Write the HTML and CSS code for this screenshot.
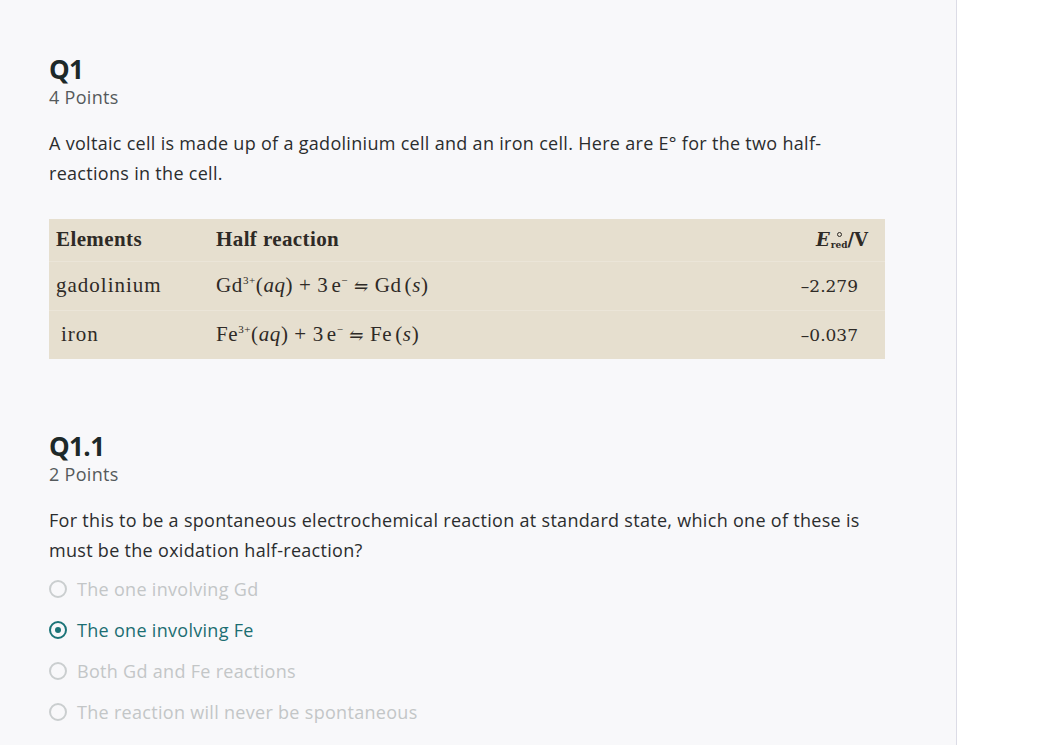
FILE: index.html
```html
<!DOCTYPE html>
<html>
<head>
<meta charset="utf-8">
<link rel="stylesheet" href="styles.css">
</head>
<body>
<div class="layout">
  <main class="main">
    <section class="question">
      <h1 class="q-title">Q1</h1>
      <div class="q-points">4 Points</div>
      <p class="q-text">A voltaic cell is made up of a gadolinium cell and an iron cell. Here are E° for the two half-reactions in the cell.</p>
      <table class="chem">
        <tr class="head">
          <th class="c1">Elements</th>
          <th class="c2">Half reaction</th>
          <th class="c3"><span class="ev"><i>E</i><span class="ss"><span class="deg"></span><span class="red">red</span></span>/V</span></th>
        </tr>
        <tr>
          <td class="c1">gadolinium</td>
          <td class="c2">Gd<sup>3+</sup>(<i>aq</i>) + 3<span class="thin"></span>e<sup>−</sup> <span class="eq">⇋</span> Gd<span class="thin"></span>(<i>s</i>)</td>
          <td class="c3 num">–2.279</td>
        </tr>
        <tr>
          <td class="c1 ind">iron</td>
          <td class="c2">Fe<sup>3+</sup>(<i>aq</i>) + 3<span class="thin"></span>e<sup>−</sup> <span class="eq">⇋</span> Fe<span class="thin"></span>(<i>s</i>)</td>
          <td class="c3 num">–0.037</td>
        </tr>
      </table>
    </section>
    <section class="question sub">
      <h2 class="q-title">Q1.1</h2>
      <div class="q-points">2 Points</div>
      <p class="q-text">For this to be a spontaneous electrochemical reaction at standard state, which one of these is must be the oxidation half-reaction?</p>
      <ul class="options">
        <li class="opt"><span class="radio"></span>The one involving Gd</li>
        <li class="opt selected"><span class="radio"></span>The one involving Fe</li>
        <li class="opt"><span class="radio"></span>Both Gd and Fe reactions</li>
        <li class="opt"><span class="radio"></span>The reaction will never be spontaneous</li>
      </ul>
    </section>
  </main>
  <aside class="side"></aside>
</div>
</body>
</html>
```

FILE: styles.css
```css
* { box-sizing: border-box; }
html, body { margin: 0; padding: 0; height: 100%; }
body {
  background: #ffffff;
  font-family: "Open Sans", Lato, sans-serif;
  color: #2b2d2e;
}
.layout {
  display: flex;
  height: 745px;
  overflow: hidden;
}
.main {
  width: 957px;
  flex: none;
  background: #f8f8fa;
  border-right: 1px solid #dcdce6;
  padding: 52px 0 0 49px;
}
.side { flex: 1; background: #fff; }
.question { width: 836px; }
.q-title {
  margin: 0;
  font-size: 26px;
  font-weight: 700;
  line-height: 34px;
  color: #1d2929;
  letter-spacing: -0.6px;
}
.q-points {
  font-size: 18px;
  line-height: 22px;
  color: #555a5c;
  letter-spacing: 0.3px;
}
.q-text {
  margin: 20px 0 0;
  font-size: 18px;
  line-height: 30px;
  color: #2b2d2e;
  letter-spacing: 0.3px;
}
.chem {
  margin-top: 31px;
  width: 836px;
  border-collapse: collapse;
  background: #e6dfcf;
  font-family: "Liberation Serif", "DejaVu Serif", serif;
  color: #2e2a26;
  font-size: 21px;
  letter-spacing: 0.6px;
}
.chem tr { height: 49px; }
.chem tr.head { height: 42px; }
.chem tr + tr td { border-top: 1px solid #ebe5d8; }
.chem th { font-weight: 700; text-align: left; letter-spacing: 0.4px; }
.chem .c1 { width: 166px; padding-left: 7px; letter-spacing: 1px; }
.chem th.c1 { letter-spacing: 0.4px; }
.chem .c1.ind { padding-left: 12px; }
.chem .c3 { text-align: right; padding-right: 27px; }
.chem sup { font-size: 11px; vertical-align: 8px; }
.chem .eq { font-size: 17px; }
.chem .thin { display: inline-block; width: 3px; }
.chem th.c3 { padding-right: 17px; }
.ev { font-family: "DejaVu Serif", serif; font-size: 18px; letter-spacing: 0; }
.ev i { font-weight: 700; }
.ss {
  display: inline-flex;
  flex-direction: column;
  align-items: center;
  vertical-align: text-top;
  padding-top: 3px;
  margin: 0 0 0 1px;
}
.ss .deg {
  width: 5px;
  height: 5px;
  border: 1px solid #2e2a26;
  border-radius: 50%;
  margin-bottom: 3px;
}
.ss .red { display: block; font-size: 9px; line-height: 10px; font-weight: 700; }
.num { font-family: "DejaVu Serif", serif; font-size: 17px; letter-spacing: 0; }
.sub { margin-top: 70px; }
.options {
  list-style: none;
  margin: 3px 0 0;
  padding: 0;
}
.opt {
  display: flex;
  align-items: center;
  gap: 10px;
  height: 41px;
  font-size: 18px;
  letter-spacing: 0.3px;
  color: #c3c6c7;
}
.radio {
  width: 18px;
  height: 18px;
  border: 2.5px solid #cacecf;
  border-radius: 50%;
  flex: none;
  position: relative;
}
.opt.selected { color: #1c6e72; }
.opt.selected .radio { border-color: #1b7478; }
.opt.selected .radio::after {
  content: "";
  position: absolute;
  left: 50%; top: 50%;
  width: 6px; height: 6px;
  margin: -3px 0 0 -3px;
  border-radius: 50%;
  background: #1b7478;
}
```
